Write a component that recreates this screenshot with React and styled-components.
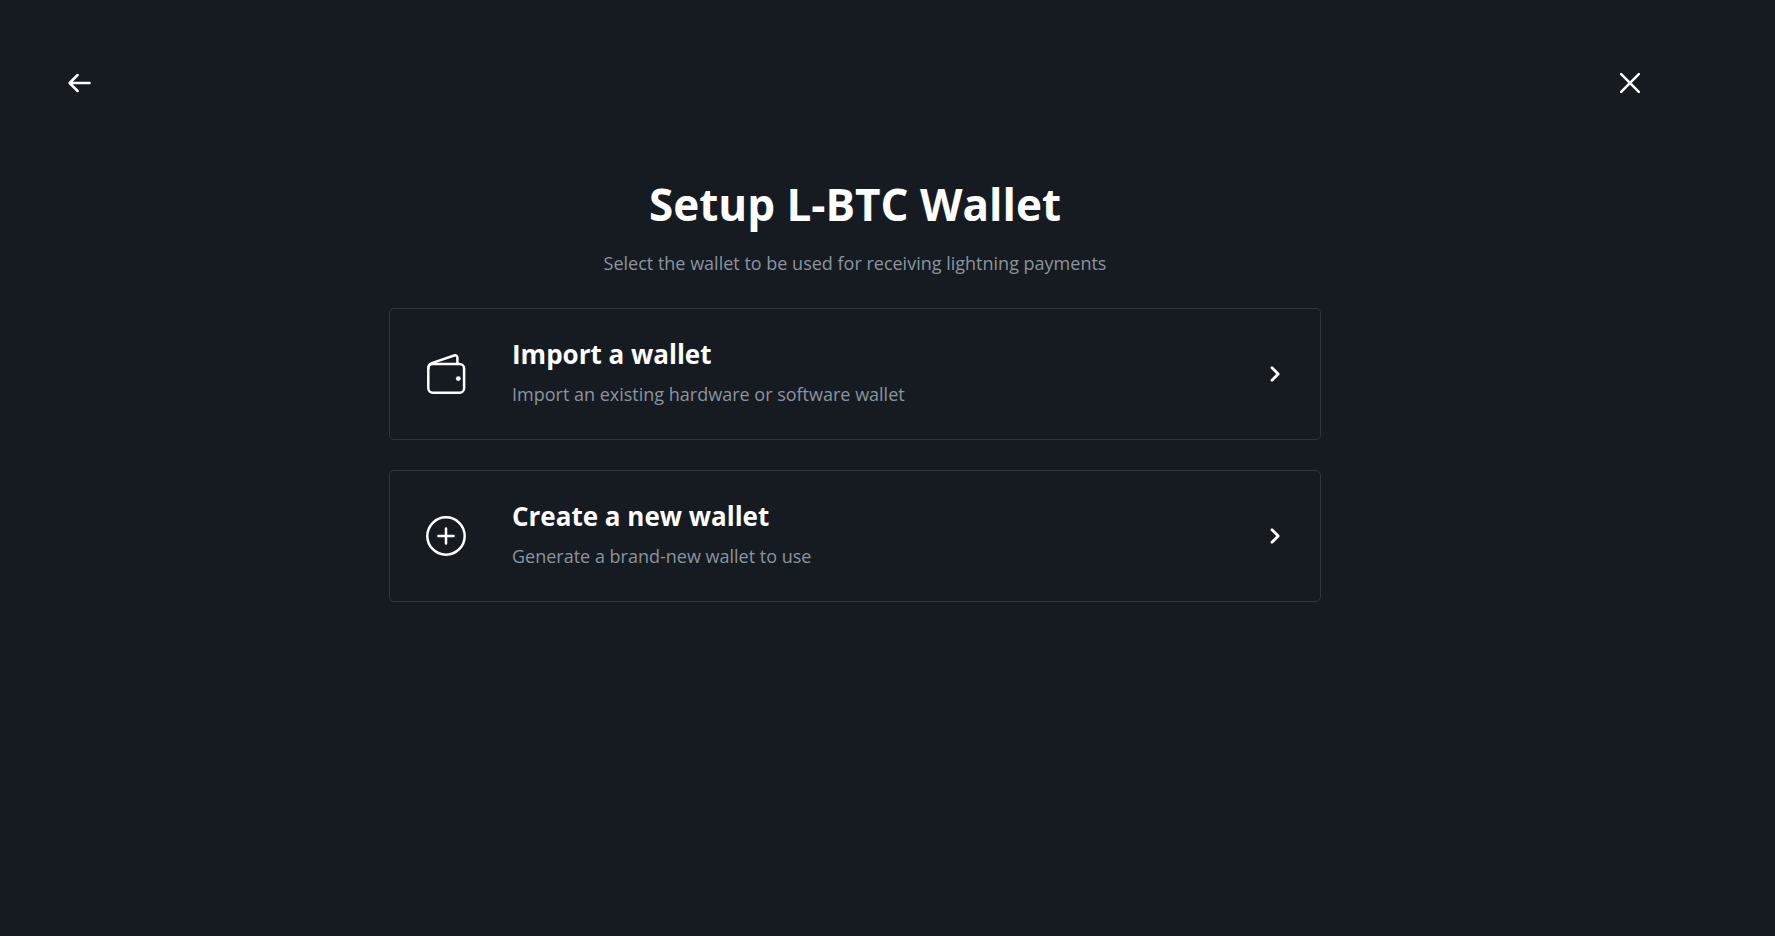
import React from "react";
import styled, { createGlobalStyle } from "styled-components";

const GlobalStyle = createGlobalStyle`
  *, *::before, *::after { box-sizing: border-box; }
  body {
    margin: 0;
    background: #161b22;
    color: #ffffff;
    font-family: "Open Sans", "Noto Sans", sans-serif;
    font-size: 18px;
    line-height: 30px;
  }
`;

const Page = styled.div`
  min-height: 100vh;
  padding: 63px 125px 64px 60px;
`;

const TopBar = styled.nav`
  display: flex;
  align-items: center;
  justify-content: space-between;
`;

const IconButton = styled.button`
  display: flex;
  align-items: center;
  justify-content: center;
  width: 40px;
  height: 40px;
  padding: 0;
  border: 0;
  background: transparent;
  color: inherit;
  cursor: pointer;
`;

const Main = styled.main`
  width: 100%;
  max-width: 932px;
  margin: 75px auto 0;
`;

const Intro = styled.header`
  display: flex;
  flex-direction: column;
  gap: 18px;
  text-align: center;
`;

const Title = styled.h1`
  margin: 0;
  font-size: 44px;
  line-height: 52px;
  font-weight: 700;
`;

const Muted = styled.p`
  margin: 0;
  color: #8b949e;
`;

const Options = styled.div`
  display: flex;
  flex-direction: column;
  gap: 30px;
  margin-top: 30px;
`;

const OptionLink = styled.a`
  display: flex;
  align-items: center;
  padding: 30px 33px 30px 36px;
  border: 1px solid #30363d;
  border-radius: 5px;
  color: inherit;
  text-decoration: none;
`;

const OptionIcon = styled.span`
  display: flex;
  flex: none;
  margin-right: 46px;
`;

const OptionText = styled.div`
  display: flex;
  flex: 1;
  flex-direction: column;
  gap: 10px;
  min-width: 0;
`;

const OptionTitle = styled.h2`
  margin: 0;
  font-size: 26px;
  line-height: 30px;
  font-weight: 700;
`;

const Drawing = styled.svg`
  display: block;
  flex: none;
  fill: none;
  stroke: currentColor;
  stroke-linecap: round;
  stroke-linejoin: round;
`;

const BackIcon = () => (
  <Drawing width="26" height="26" viewBox="0 0 26 26" strokeWidth="2.5" aria-hidden="true">
    <path d="M22.6 13h-20M10.6 5l-8 8 8 8" />
  </Drawing>
);

const CloseIcon = () => (
  <Drawing width="26" height="26" viewBox="0 0 26 26" strokeWidth="2.5" aria-hidden="true">
    <path d="M4.2 4.2l17.6 17.6M21.8 4.2L4.2 21.8" />
  </Drawing>
);

const WalletIcon = () => (
  <Drawing width="40" height="40" viewBox="0 0 40 40" strokeWidth="2.5" aria-hidden="true">
    <rect x="2.3" y="10.1" width="35.8" height="28.6" rx="4.5" />
    <path d="M2.3 14.6c0-3 .9-4.7 3.4-5.5L28.2 1.5c1.9-.6 3.2.3 3.2 2.2v6.4" />
    <circle cx="32.3" cy="24.6" r="2.4" fill="currentColor" stroke="none" />
  </Drawing>
);

const PlusCircleIcon = () => (
  <Drawing width="40" height="40" viewBox="0 0 40 40" strokeWidth="2.5" aria-hidden="true">
    <circle cx="20" cy="20" r="18.7" />
    <path d="M20 12.4v15.2M12.4 20h15.2" />
  </Drawing>
);

const ChevronIcon = () => (
  <Drawing width="24" height="24" viewBox="0 0 24 24" strokeWidth="2.8" aria-hidden="true">
    <path d="M9 5.8l6.2 6.2L9 18.2" />
  </Drawing>
);

const options = [
  {
    title: "Import a wallet",
    text: "Import an existing hardware or software wallet",
    href: "#import",
    Icon: WalletIcon,
  },
  {
    title: "Create a new wallet",
    text: "Generate a brand-new wallet to use",
    href: "#generate",
    Icon: PlusCircleIcon,
  },
];

export default function App() {
  return (
    <>
      <GlobalStyle />
      <Page>
        <TopBar>
          <IconButton type="button" aria-label="Back">
            <BackIcon />
          </IconButton>
          <IconButton type="button" aria-label="Close">
            <CloseIcon />
          </IconButton>
        </TopBar>
        <Main>
          <Intro>
            <Title>Setup L-BTC Wallet</Title>
            <Muted>Select the wallet to be used for receiving lightning payments</Muted>
          </Intro>
          <Options>
            {options.map(({ title, text, href, Icon }) => (
              <OptionLink key={href} href={href}>
                <OptionIcon>
                  <Icon />
                </OptionIcon>
                <OptionText>
                  <OptionTitle>{title}</OptionTitle>
                  <Muted>{text}</Muted>
                </OptionText>
                <ChevronIcon />
              </OptionLink>
            ))}
          </Options>
        </Main>
      </Page>
    </>
  );
}
